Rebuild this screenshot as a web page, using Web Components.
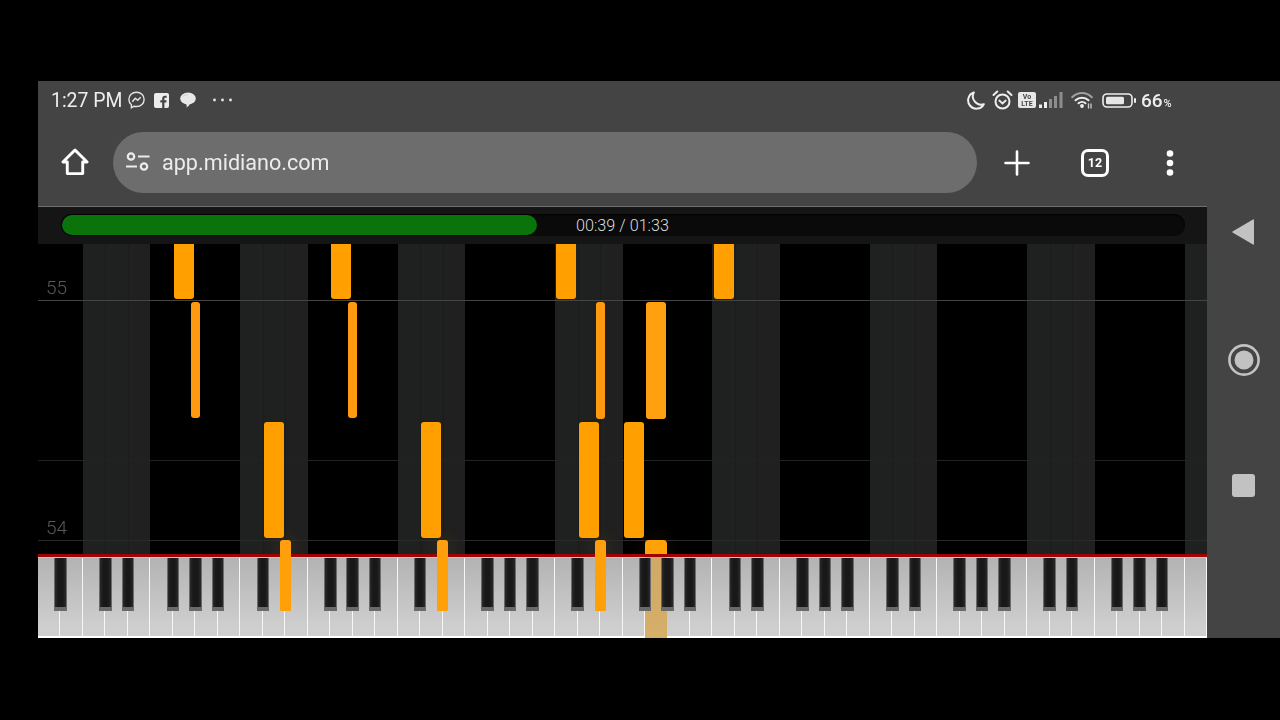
<!DOCTYPE html>
<html><head><meta charset="utf-8">
<style>
html,body{margin:0;background:#000;height:720px;overflow:hidden}
body{padding:81px 0 0 38px;box-sizing:border-box;font-family:Roboto,"Liberation Sans",sans-serif}
</style></head>
<body>
<x-screen>
  <x-status-bar></x-status-bar>
  <x-browser-bar url="app.midiano.com" tabs="12"></x-browser-bar>
  <x-progress elapsed="00:39" total="01:33" percent="42.3"></x-progress>
  <x-roll></x-roll>
  <x-piano></x-piano>
  <x-nav-rail slot="rail"></x-nav-rail>
</x-screen>
<script>
class Base extends HTMLElement{
  connectedCallback(){
    if(this.shadowRoot) return;
    this.attachShadow({mode:'open'}).innerHTML=this.markup();
  }
}
customElements.define('x-screen',class extends Base{markup(){return `<style>
:host{display:flex;width:1242px;height:557px;background:#444}
.main{width:1169px;display:flex;flex-direction:column;height:100%}
</style><div class="main"><slot></slot></div><slot name="rail"></slot>`}});

customElements.define('x-status-bar',class extends Base{markup(){return `<style>
:host{display:flex;height:38px;box-sizing:border-box;padding:0 36px 0 13px;align-items:center;justify-content:space-between;color:#eee;background:#444;filter:blur(.35px)}
.g{display:flex;align-items:center}
svg{display:block;flex:none}
.t{font-size:19.4px;width:71px;white-space:nowrap;line-height:38px;padding-top:1px}
.b{font-size:19px;font-weight:500;margin-left:5px;white-space:nowrap;display:flex;align-items:baseline;width:30px}
.b small{font-size:11px;margin-left:1px}
</style>
<div class="g">
<span class="t">1:27 PM</span>
<svg style="margin-left:6px" width="17" height="18" viewBox="0 0 17 18" fill="none" stroke="#e4e4e4" stroke-width="1.4"><path d="M8.5 1.2C4.1 1.2.9 4.4.9 8.4c0 2.2.9 4.1 2.5 5.4v2.900l2.700-1.500c.8.2 1.600.3 2.400.3 4.400 0 7.600-3.100 7.600-7.100S12.900 1.200 8.500 1.200z"/><path d="M4.300 10.800l3-3.600 2.400 2.100 3-3.100" stroke-width="1.500"/></svg>
<svg style="margin-left:9px" width="15" height="15" viewBox="0 0 15 15"><rect width="15" height="15" rx="2" fill="#ececec"/><path d="M10.400 15V9.400h1.900l.3-2.200h-2.200V5.900c0-.7.2-1.100 1.100-1.100h1.200v-2c-.3 0-.9-.1-1.700-.1-1.700 0-2.800 1-2.800 2.900v1.600H6.300v2.200h1.900V15z" fill="#444"/></svg>
<svg style="margin-left:11px" width="16" height="16" viewBox="0 0 16 16"><ellipse cx="8" cy="6.500" rx="7.800" ry="6" fill="#e8e8e8"/><path d="M5.500 11c1 .8 3 1 4.500.8-.8 1.700-2 3-3.500 3.700.5-1.500.2-3-1-4.500z" fill="#e8e8e8"/><path d="M3 4.500C4.200 3.200 6 2.700 8 2.700" stroke="#cfcfcf" stroke-width="1" fill="none"/></svg>
<svg style="margin-left:17px" width="19" height="4" viewBox="0 0 19 4" fill="#e8e8e8"><circle cx="1.500" cy="2" r="1.400"/><circle cx="9.500" cy="2" r="1.400"/><circle cx="17.500" cy="2" r="1.400"/></svg>
</div>
<div class="g">
<svg width="18" height="19" viewBox="0 0 18 19" fill="none" stroke="#eee" stroke-width="2" stroke-linejoin="round"><path d="M6.800 1.500A8.300 8.300 0 1 0 16.800 13.200 8.300 8.300 0 0 1 6.800 1.500z"/></svg>
<svg style="margin-left:7px" width="21" height="20" viewBox="0 0 21 20" fill="none" stroke="#eee" stroke-width="2" stroke-linecap="round"><circle cx="10.500" cy="11.500" r="7"/><path d="M1.500 5 5.300 1.500M19.500 5l-3.800-3.500"/><path d="M7.300 10.500l3.200 3 3.200-3" stroke-width="1.800"/></svg>
<svg style="margin-left:5px" width="18" height="16" viewBox="0 0 18 16"><rect width="18" height="16" rx="2" fill="#e8e8e8"/><text x="9" y="7" font-size="7" font-weight="700" text-anchor="middle" fill="#444" font-family="Roboto,sans-serif">Vo</text><text x="9" y="14" font-size="7" font-weight="700" text-anchor="middle" fill="#444" font-family="Roboto,sans-serif">LTE</text></svg>
<svg style="margin-left:3px" width="24" height="16" viewBox="0 0 24 16"><rect x="0" y="12.500" width="3" height="3.500" fill="#eee"/><rect x="5" y="10" width="3" height="6" fill="#eee"/><rect x="10" y="7" width="3" height="9" fill="#8d8d8d"/><rect x="15" y="4" width="3" height="12" fill="#8d8d8d"/><rect x="20.500" y="0" width="3" height="16" fill="#8d8d8d"/></svg>
<svg style="margin-left:8px" width="22" height="18" viewBox="0 0 22 18" fill="none" stroke-linecap="round"><path d="M1.200 6.200C6.500 .6 15.500 .6 20.800 6.200" stroke="#a0a0a0" stroke-width="2"/><path d="M4.500 9.300c3.500-3.500 9.500-3.500 13 0" stroke="#eee" stroke-width="2"/><path d="M7.500 12.300c2-1.800 5-1.800 7 0" stroke="#eee" stroke-width="2"/><circle cx="11" cy="15" r="1.900" fill="#eee"/><path d="M17.500 17v-4M20 13v4" stroke="#ccc" stroke-width="1.300"/></svg>
<svg style="margin-left:9px" width="34" height="15" viewBox="0 0 34 15"><rect x="1" y="1" width="29" height="13" rx="4" fill="none" stroke="#eee" stroke-width="1.600"/><rect x="4" y="3.800" width="18" height="7.400" rx="1.500" fill="#e6e6e6"/><rect x="32" y="5" width="2" height="5" rx="1" fill="#eee"/></svg>
<span class="b">66<small>%</small></span>
</div>`}});

customElements.define('x-browser-bar',class extends Base{markup(){return `<style>
:host{display:flex;height:87px;align-items:center;background:#444;color:#fff;flex:none;filter:blur(.3px)}
.c{flex:none;display:flex;align-items:center;justify-content:center}
svg{display:block}
.url{flex:1;height:61px;border-radius:31px;background:#6d6d6d;display:flex;align-items:center;padding-left:13px;gap:12px;color:#ececec;font-size:21.6px;margin-bottom:1px}
.tab{width:28px;height:28px;box-sizing:border-box;border:3px solid #fff;border-radius:7px;display:flex;align-items:center;justify-content:center;font-size:12.500px;font-weight:700;margin-right:1px}
</style>
<div class="c" style="width:75px"><svg style="margin:0 1px 2px 0" width="28" height="28" viewBox="0 0 29 29" fill="none" stroke="#fff" stroke-width="3" stroke-linejoin="round" stroke-linecap="round"><path d="M2 14.500 14.500 2 27 14.500H22.500V26.500H6.500V14.500z"/></svg></div>
<div class="url"><svg width="24" height="20" viewBox="0 0 24 20" fill="none" stroke="#ececec" stroke-width="2.200"><circle cx="5" cy="4.500" r="3.200"/><path d="M12 4.500H23.500M0 14.500H11"/><circle cx="18" cy="14.500" r="3.200"/></svg><span>${this.getAttribute('url')}</span></div>
<div class="c" style="width:80px"><svg width="26" height="26" viewBox="0 0 26 26" stroke="#fff" stroke-width="2.600" stroke-linecap="round"><path d="M13 1.500v23M1.500 13h23"/></svg></div>
<div class="c" style="width:77px"><div class="tab">${this.getAttribute('tabs')}</div></div>
<div class="c" style="width:73px"><svg style="margin-right:1px" width="8" height="26" viewBox="0 0 8 26" fill="#fff"><circle cx="4" cy="3.500" r="3.300"/><circle cx="4" cy="13" r="3.300"/><circle cx="4" cy="22.500" r="3.300"/></svg></div>`}});

customElements.define('x-progress',class extends Base{markup(){return `<style>
:host{display:block;height:38px;box-sizing:border-box;background:#151515;border-top:1px solid #6e6e6e;padding:7px 22px 7px 23px;flex:none}
.track{position:relative;height:22px;border-radius:11px;background:#0a0a0a;display:flex;overflow:hidden;box-shadow:inset 0 1px 2px #000}
.fill{width:${this.getAttribute('percent')}%;background:#0a730a;border-radius:11px;margin:1px 0 1px 1px}
.txt{position:absolute;inset:0;display:flex;align-items:center;justify-content:center;color:#dcdcdc;font-size:16.2px;font-weight:300;white-space:nowrap;padding-right:1px}
</style><div class="track"><div class="fill"></div><div class="txt">${this.getAttribute('elapsed')} / ${this.getAttribute('total')}</div></div>`}});

customElements.define('x-note',class extends HTMLElement{
  connectedCallback(){
    if(this.shadowRoot) return;
    const g=n=>this.getAttribute(n);
    this.attachShadow({mode:'open'}).innerHTML=`<style>:host{position:absolute;left:${g('x')-38}px;top:${g('y')-244}px;width:${g('w')}px;height:${g('h')}px;background:${g('c')||'#ffa000'};border-radius:${g('r')||'3px'};${g('glow')?'box-shadow:0 0 14px 6px rgba(255,150,0,.05)':''}}</style>`;
  }
});

customElements.define('x-roll',class extends Base{markup(){
  const P=157.36,s=45;
  const notes=[
   [174,240,20,59],[331,240,20,59],[556,240,20,59],[714,240,20,59],
   [191,302,9,116,'#ff9a10'],[348,302,9,116,'#ff9a10'],[596,302,9,117,'#ff9a10'],[646,302,20,117,'#ffa010'],
   [264,422,20,116],[421,422,20,116],[579,422,20,116],[624,422,20,116],
   [280,540,11,20,'#ff9f10','3px 3px 0 0',1],[437,540,11,20,'#ff9f10','3px 3px 0 0',1],[595,540,11,20,'#ff9f10','3px 3px 0 0',1],[645,540,22,20,'#ffa208','4px 4px 0 0',1]
  ].map(n=>`<x-note x="${n[0]}" y="${n[1]}" w="${n[2]}" h="${n[3]}" ${n[4]?`c="${n[4]}"`:''} ${n[5]?`r="${n[5]}"`:''} ${n[6]?'glow="1"':''}></x-note>`).join('');
  return `<style>
:host{display:block;position:relative;height:310px;flex:none;overflow:hidden;background-color:#000;filter:blur(.4px);
 background-image:repeating-linear-gradient(90deg,transparent 0 ${s}px,#1f2020 ${s}px ${s+22.5}px,#1a1b1b ${s+22.5}px ${s+23.5}px,#1f2020 ${s+23.5}px ${s+45}px,#1a1b1b ${s+45}px ${s+46}px,#202020 ${s+46}px ${s+67.5}px,transparent ${s+67.5}px ${P}px)}
.l{position:absolute;left:0;right:0;height:1px}
.n{position:absolute;left:8px;font-size:19px;font-weight:300;color:#585858;line-height:24px}
</style>
<div class="l" style="top:56px;background:#444"></div>
<div class="l" style="top:216px;background:#222"></div>
<div class="l" style="top:296px;background:#2a2a2a"></div>
<span class="n" style="top:32px">55</span>
<span class="n" style="top:272px">54</span>
${notes}`}});

customElements.define('x-piano',class extends Base{markup(){
  const W=1169/52, active=[11,18,25];
  let whites='',blacks='';
  for(let i=0;i<52;i++) whites+=`<div class="w${i==27?' gold':''}"></div>`;
  const has=i=>{ if(i==1) return true; if(i<3) return false; const m=(i-3)%7; return m==0||m==1||m==3||m==4||m==5; };
  for(let i=1;i<52;i++) if(has(i)) blacks+=`<div class="b${active.includes(i)?' on':''}" style="left:${(i*W-6.25).toFixed(2)}px"></div>`;
  return `<style>
:host{display:flex;flex-direction:column;height:84px;flex:none;background:#000;filter:blur(.4px)}
.red{height:3px;background:#a00303;flex:none}
.kb{position:relative;flex:1;display:grid;grid-template-columns:repeat(52,1fr);border-top:1px solid #f0bcbc;border-bottom:2px solid #fff}
.w{background:linear-gradient(#b3b3b3,#cfcfcf 90%);box-sizing:border-box;border-right:1.5px solid #f6f6f6}
.w.gold{background:linear-gradient(#cfa965,#d6b06a);border-right:1px solid #d3ad62;margin:-1px 0 -2px}
.b{position:absolute;top:0;width:12.5px;height:53px;box-sizing:border-box;background:linear-gradient(90deg,#2a2a2a,#181818 30% 70%,#2a2a2a);border:solid #6a6a6a;border-width:0 1.5px 4px}
.b.on{background:#ffa008;top:-4px;height:57px;width:11px;margin-left:.75px;border-width:0;border-radius:0 0 1px 1px}
</style><div class="red"></div><div class="kb">${whites}${blacks}</div>`}});

customElements.define('x-nav-rail',class extends Base{markup(){return `<style>
:host{display:flex;flex-direction:column;align-items:center;width:73px;box-sizing:border-box;padding-top:138px;background:#444;flex:none}
svg{display:block}
</style>
<svg width="22" height="26" viewBox="0 0 22 26" style="margin-right:1px"><path d="M22 1v24q0 1-1 .5L.5 13.500q-.5-.5 0-1L21 .5q1-.5 1 .5z" fill="#c2c2c2"/></svg>
<svg style="margin-top:99px" width="32" height="32" viewBox="0 0 32 32"><circle cx="16" cy="16" r="14.600" fill="none" stroke="#c2c2c2" stroke-width="2.600"/><circle cx="16" cy="16" r="9.500" fill="#c2c2c2"/></svg>
<svg style="margin-top:98px" width="23" height="23" viewBox="0 0 23 23"><rect width="23" height="23" rx="3" fill="#c2c2c2"/></svg>`}});
</script>
</body></html>
